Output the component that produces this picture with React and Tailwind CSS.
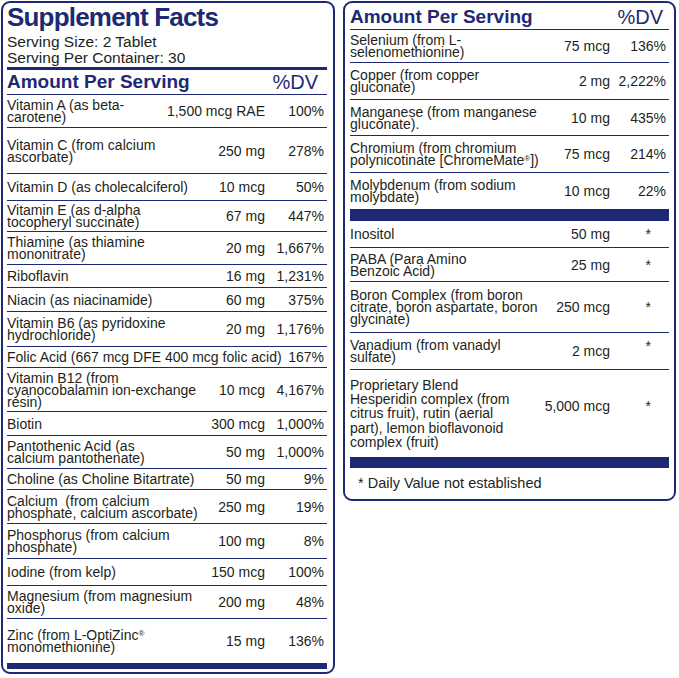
const leftRows = [
  { h: "h-[33px]", name: ["Vitamin A (as beta-", "carotene)"], amt: "1,500 mcg RAE", dv: "100%" },
  { h: "h-[46px]", name: ["Vitamin C (from calcium", "ascorbate)"], amt: "250 mg", dv: "278%" },
  { h: "h-[27px]", name: ["Vitamin D (as cholecalciferol)"], amt: "10 mcg", dv: "50%" },
  { h: "h-[31px]", name: ["Vitamin E (as d-alpha", "tocopheryl succinate)"], amt: "67 mg", dv: "447%" },
  { h: "h-[33px]", name: ["Thiamine (as thiamine", "mononitrate)"], amt: "20 mg", dv: "1,667%" },
  { h: "h-[23px]", name: ["Riboflavin"], amt: "16 mg", dv: "1,231%" },
  { h: "h-[24px]", name: ["Niacin (as niacinamide)"], amt: "60 mg", dv: "375%" },
  { h: "h-[35px]", name: ["Vitamin B6 (as pyridoxine", "hydrochloride)"], amt: "20 mg", dv: "1,176%" },
  { h: "h-[21px]", name: ["Folic Acid (667 mcg DFE 400 mcg folic acid)"], amt: "", dv: "167%" },
  { h: "h-[44px]", name: ["Vitamin B12 (from", "cyanocobalamin ion-exchange", "resin)"], amt: "10 mcg", dv: "4,167%" },
  { h: "h-[24px]", name: ["Biotin"], amt: "300 mcg", dv: "1,000%" },
  { h: "h-[33px]", name: ["Pantothenic Acid (as", "calcium pantothenate)"], amt: "50 mg", dv: "1,000%" },
  { h: "h-[21px]", name: ["Choline (as Choline Bitartrate)"], amt: "50 mg", dv: "9%" },
  { h: "h-[34px]", name: ["Calcium\u00a0 (from calcium", "phosphate, calcium ascorbate)"], amt: "250 mg", dv: "19%" },
  { h: "h-[35px]", name: ["Phosphorus (from calcium", "phosphate)"], amt: "100 mg", dv: "8%" },
  { h: "h-[27px]", name: ["Iodine (from kelp)"], amt: "150 mcg", dv: "100%" },
  { h: "h-[33px]", name: ["Magnesium (from magnesium", "oxide)"], amt: "200 mg", dv: "48%" },
  { h: "h-[44px]", name: [<>Zinc (from L-OptiZinc<sup className="text-[8px]">®</sup></>, "monomethionine)"], amt: "15 mg", dv: "136%", last: true },
];

const rightTop = [
  { h: "h-[33px]", name: ["Selenium (from L-", "selenomethionine)"], amt: "75 mcg", dv: "136%" },
  { h: "h-[37px]", name: ["Copper (from copper", "gluconate)"], amt: "2 mg", dv: "2,222%" },
  { h: "h-[36px]", name: ["Manganese (from manganese", "gluconate)."], amt: "10 mg", dv: "435%" },
  { h: "h-[37px]", name: ["Chromium (from chromium", <>polynicotinate [ChromeMate<sup className="text-[8px]">®</sup>])</>], amt: "75 mcg", dv: "214%" },
  { h: "h-[36px]", name: ["Molybdenum (from sodium", "molybdate)"], amt: "10 mcg", dv: "22%", last: true },
];

const rightBottom = [
  { h: "h-[27px]", name: ["Inositol"], amt: "50 mg", star: true },
  { h: "h-[34px]", name: ["PABA (Para Amino", "Benzoic Acid)"], amt: "25 mg", star: true },
  { h: "h-[51px]", name: ["Boron Complex (from boron", "citrate, boron aspartate, boron", "glycinate)"], amt: "250 mcg", star: true },
  { h: "h-[37px]", name: ["Vanadium (from vanadyl", "sulfate)"], amt: "2 mcg", star: true, starCls: "mb-[10px]" },
  {
    h: "h-[87px]",
    name: ["Proprietary Blend", "Hesperidin complex (from", "citrus fruit), rutin (aerial", "part), lemon bioflavonoid", "complex (fruit)"],
    amt: "5,000 mcg",
    star: true,
    lead: "leading-[14.3px]",
    amtCls: "mb-[16px]",
    starCls: "mb-[16px]",
    last: true,
  },
];

function Row({ row, dvW }) {
  return (
    <div
      className={`flex items-center pr-[3px] text-[14px] text-[#231f20] ${row.h} ${
        row.last ? "" : "border-b-[1.5px] border-[#1d2a73]"
      }`}
    >
      <div className={`flex-1 whitespace-nowrap ${row.lead || "leading-[12px]"}`}>
        {row.name.map((line, i) => (
          <div key={i}>{line}</div>
        ))}
      </div>
      {row.amt && <div className={`whitespace-nowrap text-right leading-[14px] ${row.amtCls || ""}`}>{row.amt}</div>}
      <div className={`${dvW} text-right leading-[14px] whitespace-nowrap ${row.starCls || ""}`}>
        {row.star ? <span className="mr-[15px]">*</span> : row.dv}
      </div>
    </div>
  );
}

function Header({ dvPad }) {
  return (
    <div className="flex justify-between items-center h-[24px] border-b-[1.5px] border-[#1d2a73] box-content">
      <span className="text-[19px] font-bold text-[#1d2a73] leading-[24px]">Amount Per Serving</span>
      <span className={`text-[20px] text-[#1d2a73] leading-[24px] ${dvPad}`}>%DV</span>
    </div>
  );
}

export default function App() {
  return (
    <div className="flex gap-[8px] pl-[1px] pt-[1px] bg-white min-h-screen items-start" style={{ fontFamily: '"Liberation Sans", Arial, sans-serif' }}>
      {/* Left panel */}
      <div className="w-[334px] border-2 border-[#1d2a73] rounded-[9px] pl-[4px] pr-[6px] pb-[3px]">
        <h1 className="text-[26px] font-bold tracking-[-0.8px] leading-[28px] text-[#1d2a73]">Supplement Facts</h1>
        <div className="mt-[3px] text-[15.5px] leading-[16px] text-[#231f20]">
          <div>Serving Size: 2 Tablet</div>
          <div>Serving Per Container: 30</div>
        </div>
        <div className="mt-[1px] h-[3px] bg-[#1d2a73]" />
        <Header dvPad="pr-[9px]" />
        {leftRows.map((r, i) => (
          <Row key={i} row={r} dvW="w-[59px]" />
        ))}
        <div className="h-[6px] bg-[#1d2a73]" />
      </div>

      {/* Right panel */}
      <div className="w-[333px] border-2 border-[#1d2a73] rounded-[9px] pl-[5px] pr-[5px] pt-[2px]">
        <Header dvPad="pr-[6px]" />
        {rightTop.map((r, i) => (
          <Row key={i} row={r} dvW="w-[56px]" />
        ))}
        <div className="h-[12px] bg-[#1d2a73]" />
        {rightBottom.map((r, i) => (
          <Row key={i} row={r} dvW="w-[56px]" />
        ))}
        <div className="h-[11px] bg-[#1d2a73]" />
        <div className="h-[31px] flex items-center pl-[8px] text-[14.5px] text-[#231f20]">* Daily Value not established</div>
      </div>
    </div>
  );
}
